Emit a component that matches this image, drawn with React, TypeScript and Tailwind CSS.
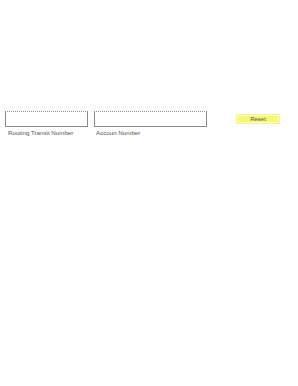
export default function App() {
  return (
    <div className="w-[298px] h-[386px] bg-white" style={{ fontFamily: '"Liberation Sans", Arial, sans-serif' }}>
      <div className="flex items-start pt-[111px] pl-[5px]">
        <div className="flex flex-col">
          <div className="w-[83px] h-[16px] border border-[#8a8a8a] border-t-[#999]" style={{ borderTopStyle: "dotted" }} />
          <div className="text-[6.2px] text-[#555] leading-none mt-[3px] pl-[3px]">Routing Transit Number</div>
        </div>
        <div className="flex flex-col ml-[6px]">
          <div className="w-[113px] h-[16px] border border-[#8a8a8a] border-t-[#999]" style={{ borderTopStyle: "dotted" }} />
          <div className="text-[6.2px] text-[#555] leading-none mt-[3px] pl-[2px]">Accoun Number</div>
        </div>
        <div className="ml-[29px] mt-[3px] w-[44px] h-[10px] bg-[#f6f67a] p-[1px]">
          <div className="w-full h-full border border-[#fbfbd0] flex items-center justify-center text-[6px] text-[#555] leading-none">
            Reset
          </div>
        </div>
      </div>
    </div>
  );
}
